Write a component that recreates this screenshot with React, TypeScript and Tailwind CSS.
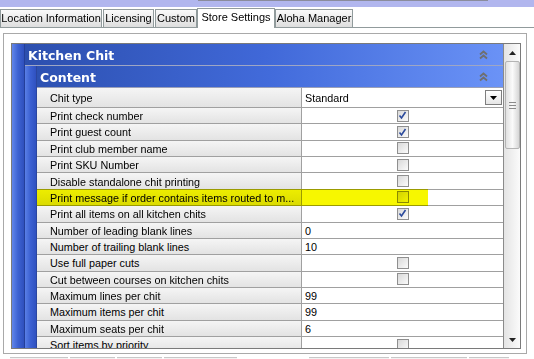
import React from 'react';

type Row = { label: string; check?: boolean; value?: string; highlight?: boolean };

const rows: Row[] = [
  { label: 'Print check number', check: true },
  { label: 'Print guest count', check: true },
  { label: 'Print club member name', check: false },
  { label: 'Print SKU Number', check: false },
  { label: 'Disable standalone chit printing', check: false },
  { label: 'Print message if order contains items routed to m...', check: false, highlight: true },
  { label: 'Print all items on all kitchen chits', check: true },
  { label: 'Number of leading blank lines', value: '0' },
  { label: 'Number of trailing blank lines', value: '10' },
  { label: 'Use full paper cuts', check: false },
  { label: 'Cut between courses on kitchen chits', check: false },
  { label: 'Maximum lines per chit', value: '99' },
  { label: 'Maximum items per chit', value: '99' },
  { label: 'Maximum seats per chit', value: '6' },
  { label: 'Sort items by priority', check: false },
];

const tabs = [
  { name: 'Location Information', w: 'w-[102px]', ml: 'ml-0' },
  { name: 'Licensing', w: 'w-[51px]', ml: 'ml-px' },
  { name: 'Custom', w: 'w-[42px]', ml: 'ml-px' },
  { name: 'Store Settings', w: 'w-[78px]', ml: 'ml-0', active: true },
  { name: 'Aloha Manager', w: 'w-[78px]', ml: 'ml-0' },
];

function Checkbox({ checked }: { checked: boolean }) {
  return (
    <div className="w-[12px] h-[12px] border border-[#8f8f8f] bg-gradient-to-br from-[#d9d9d9] to-[#fbfbfb] flex items-center justify-center">
      {checked && (
        <svg width="9" height="9" viewBox="0 0 9 9">
          <path d="M1.5 4.5 L3.5 7 L7.5 1" stroke="#2b4a9c" strokeWidth="1.6" fill="none" />
        </svg>
      )}
    </div>
  );
}

function Collapse() {
  return (
    <svg width="9" height="10" viewBox="0 0 9 10" className="mr-[15px]">
      <path d="M1 4.5 L4.5 1.5 L8 4.5" stroke="#6f6f6f" strokeWidth="1.8" fill="none" />
      <path d="M1 8.5 L4.5 5.5 L8 8.5" stroke="#6f6f6f" strokeWidth="1.8" fill="none" />
    </svg>
  );
}

export default function App() {
  return (
    <div className="w-[534px] h-[359px] overflow-hidden bg-white font-['Liberation_Sans',sans-serif] text-[10.8px] text-black">
      {/* top band */}
      <div className="h-[7px] bg-[#b1b6ee]">
        <div className="ml-[198px] w-[290px] h-px bg-[#8a8c9c]" />
      </div>

      {/* tabs */}
      <div className="mt-px h-[20px] flex items-end border-b border-[#919b9c]">
        {tabs.map((t) =>
          t.active ? (
            <div
              key={t.name}
              className={`${t.w} ${t.ml} h-[20px] -mb-px bg-white border border-b-0 border-[#919b9c] flex items-center justify-center text-[11px] pb-[2px]`}
            >
              {t.name}
            </div>
          ) : (
            <div
              key={t.name}
              className={`${t.w} ${t.ml} h-[18px] bg-gradient-to-b from-[#fafafa] to-[#dedede] border border-b-0 border-[#919b9c] flex items-center justify-center text-[11px]`}
            >
              {t.name}
            </div>
          )
        )}
      </div>

      {/* outer panel */}
      <div className="ml-[3px] mt-[5px] w-[524px] h-[321px] border border-[#a9a9a9] pt-[9px] pl-[7px] pr-[5px]">
        <div className="w-[510px] h-[306px] border border-[#7a7a7a] flex overflow-hidden">
          {/* property grid */}
          <div className="flex-1 flex">
            <div className="w-[13px] shrink-0 bg-gradient-to-r from-[#6286ea] via-[#3d62d2] to-[#2f50bd] border-r border-[#243f9a]" />
            <div className="flex-1 flex flex-col">
              <div className="h-[22px] shrink-0 bg-gradient-to-r from-[#2c4fae] via-[#4068d8] to-[#6a92f6] border-b border-[#9ea6c4] flex items-center justify-between">
                <span className="pl-[3px] pt-[3px] text-white font-bold font-['DejaVu_Sans',sans-serif] text-[12.5px]">Kitchen Chit</span>
                <Collapse />
              </div>
              <div className="flex-1 flex">
                <div className="w-[12px] shrink-0 bg-gradient-to-r from-[#5a7fe6] via-[#3b60d2] to-[#2f51c0] border-r border-[#2a46a0]" />
                <div className="flex-1 flex flex-col">
                  <div className="h-[22px] shrink-0 bg-gradient-to-r from-[#2d51b2] via-[#426bdb] to-[#6b93f7] border-b border-[#9aa0b8] flex items-center justify-between">
                    <span className="pl-[3px] pt-[3px] text-white font-bold font-['DejaVu_Sans',sans-serif] text-[12.5px]">Content</span>
                    <Collapse />
                  </div>

                  {/* chit type row */}
                  <div className="h-[20px] shrink-0 flex border-b border-[#a0a0a0]">
                    <div className="w-[265px] bg-gradient-to-b from-[#f5f5f5] to-[#e3e3e3] border-r border-[#a0a0a0] pl-[13px] pt-px flex items-center">
                      Chit type
                    </div>
                    <div className="flex-1 bg-white flex items-center justify-between pl-[3px]">
                      <span className="pt-px">Standard</span>
                      <div className="w-[17px] h-[15px] mr-px border border-[#7e7e7e] bg-gradient-to-b from-white to-[#e6e6e6] flex items-center justify-center">
                        <svg width="7" height="4" viewBox="0 0 7 4">
                          <path d="M0 0 H7 L3.5 4 Z" fill="#000" />
                        </svg>
                      </div>
                    </div>
                  </div>

                  {rows.map((r) => (
                    <div key={r.label} className="h-[16.36px] shrink-0 flex border-b border-[#a0a0a0] relative">
                      <div className="w-[265px] bg-gradient-to-b from-[#f5f5f5] to-[#e3e3e3] border-r border-[#a0a0a0] pl-[13px] pt-px flex items-center whitespace-nowrap overflow-hidden">
                        {r.label}
                      </div>
                      <div className="flex-1 bg-white flex items-center">
                        {r.value !== undefined ? (
                          <span className="pl-[3px] pt-px">{r.value}</span>
                        ) : (
                          <div className="flex-1 flex justify-center">
                            <Checkbox checked={!!r.check} />
                          </div>
                        )}
                      </div>
                      {r.highlight && (
                        <div className="absolute left-0 top-[-1px] w-[391px] h-[17px] bg-[#f7f700] mix-blend-multiply" />
                      )}
                    </div>
                  ))}
                </div>
              </div>
            </div>
          </div>

          {/* scrollbar */}
          <div className="w-[17px] shrink-0 border-l border-[#8a8a8a] bg-gradient-to-r from-[#e4e4e4] to-[#fbfbfb] flex flex-col items-center">
            <div className="h-[17px] flex items-center justify-center">
              <svg width="7" height="4" viewBox="0 0 7 4">
                <path d="M0 4 H7 L3.5 0 Z" fill="#222" />
              </svg>
            </div>
            <div className="w-[15px] h-[88px] border border-[#b4b4b4] rounded-[2px] bg-gradient-to-r from-[#e2e2e2] via-[#fafafa] to-[#d6d6d6] flex flex-col items-center justify-center gap-[2px]">
              <div className="w-[7px] h-px bg-[#8a8a8a]" />
              <div className="w-[7px] h-px bg-[#8a8a8a]" />
              <div className="w-[7px] h-px bg-[#8a8a8a]" />
            </div>
            <div className="flex-1" />
            <div className="h-[17px] flex items-center justify-center">
              <svg width="7" height="4" viewBox="0 0 7 4">
                <path d="M0 0 H7 L3.5 4 Z" fill="#222" />
              </svg>
            </div>
          </div>
        </div>
      </div>

      {/* bottom fragments */}
      <div className="mt-[3px] flex gap-[2px] pl-[10px]">
        <div className="w-[58px] h-[3px] border-t border-[#c8c8c8] bg-[#f2f2f2]" />
        <div className="w-[45px] h-[3px] border-t border-[#c8c8c8] bg-[#f2f2f2]" />
        <div className="w-[45px] h-[3px] border-t border-[#c8c8c8] bg-[#f2f2f2]" />
        <div className="w-[73px] h-[3px] border-t border-[#c8c8c8] bg-[#f2f2f2]" />
        <div className="w-[68px]" />
        <div className="w-[80px] h-[3px] border-t border-[#c8c8c8] bg-[#f2f2f2]" />
        <div className="w-[76px] h-[3px] border-t border-[#c8c8c8] bg-[#f2f2f2]" />
        <div className="w-[40px] h-[3px] border-t border-[#c8c8c8] bg-[#f2f2f2]" />
      </div>
    </div>
  );
}
